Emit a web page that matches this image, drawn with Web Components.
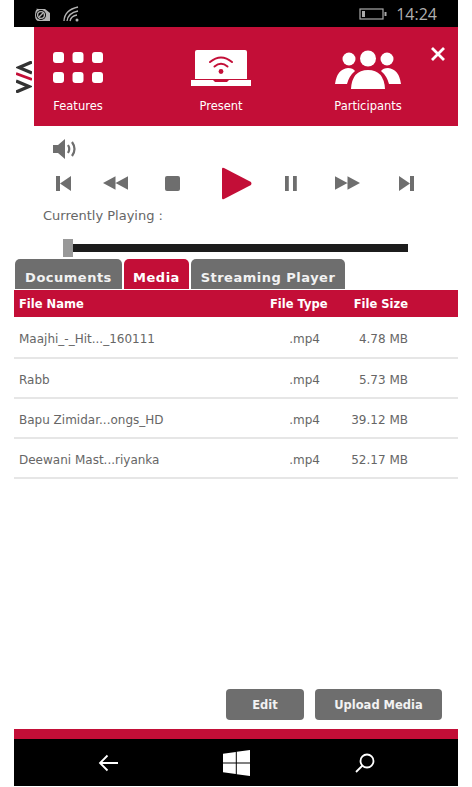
<!DOCTYPE html>
<html>
<head>
<meta charset="utf-8">
<title>Media</title>
<style>
    html, body { margin: 0; padding: 0; background: #fff; }
    body { font-family: "DejaVu Sans", sans-serif; }
</style>
</head>
<body>
<phone-shell>
    <status-bar slot="top" time="14:24"></status-bar>
    <top-nav slot="top"></top-nav>
    <media-player></media-player>
    <media-tabs active="Media"></media-tabs>
    <file-table></file-table>
    <action-bar slot="bottom"></action-bar>
    <nav-bar slot="bottom"></nav-bar>
</phone-shell>

<script>
class PhoneShell extends HTMLElement {
    constructor() {
        super();
        this.attachShadow({ mode: "open" });
        this.shadowRoot.innerHTML = `
            <style>
                :host {
                    display: flex;
                    flex-direction: column;
                    box-sizing: border-box;
                    width: 444px;
                    height: 786px;
                    margin-left: 14px;
                    background: #fff;
                }
                .main { flex: 1; }
            </style>
            <slot name="top"></slot>
            <div class="main"><slot></slot></div>
            <slot name="bottom"></slot>
        `;
    }
}

class StatusBar extends HTMLElement {
    constructor() {
        super();
        this.attachShadow({ mode: "open" });
        this.shadowRoot.innerHTML = `
            <style>
                :host {
                    display: flex;
                    align-items: center;
                    height: 27px;
                    background: #000;
                    color: #aaa;
                    padding-left: 20px;
                    padding-right: 21px;
                }
                svg { display: block; }
                .wifi { margin-left: 11px; }
                .battery { margin-left: auto; }
                .time { margin-left: 9px; font-size: 16px; font-family: "Open Sans", sans-serif; color: #b0b0b0; }
            </style>
            <svg width="18" height="16" viewBox="0 0 18 16">
                <path d="M2 3h9l5 4v8H5Q1 15 1 9Q1 3 5 2z" fill="#b4b4b4"/>
                <circle cx="7" cy="9" r="5" fill="#000"/>
                <circle cx="7" cy="9" r="3.4" fill="none" stroke="#b4b4b4" stroke-width="1.4"/>
                <path d="M5 11l4-4" stroke="#b4b4b4" stroke-width="1.4"/>
            </svg>
            <svg class="wifi" width="18" height="18" viewBox="0 0 18 18" fill="none" stroke="#b4b4b4" stroke-width="1.3">
                <path d="M1 16Q1.500 5 15 2"/>
                <path d="M4 16Q5 8 15 6"/>
                <path d="M7 16Q8 11 14 10"/>
                <circle cx="14" cy="15" r="1.500" fill="#b4b4b4" stroke="none"/>
            </svg>
            <svg class="battery" width="28" height="12" viewBox="0 0 28 12">
                <rect x="1" y="1" width="23" height="10" fill="none" stroke="#aaa" stroke-width="1.200"/>
                <rect x="3" y="3" width="3" height="6" fill="#aaa"/>
                <rect x="25.500" y="4" width="2" height="4" fill="#aaa"/>
            </svg>
            <span class="time">${this.getAttribute("time")}</span>
        `;
    }
}

class TopNav extends HTMLElement {
    constructor() {
        super();
        this.attachShadow({ mode: "open" });
        this.shadowRoot.innerHTML = `
            <style>
                :host { display: flex; height: 99px; }
                .logo { width: 20px; display: flex; align-items: center; box-sizing: border-box; }
                .logo svg { display: block; margin-left: 2px; }
                .panel {
                    position: relative;
                    flex: 1;
                    background: #c30e37;
                    color: #fff;
                    display: flex;
                    padding: 22px 0 0 19px;
                    font-size: 11.5px;
                }
                .item { display: flex; flex-direction: column; align-items: center; width: 50px; }
                .item svg { display: block; height: 40px; }
                .item span { margin-top: 10px; white-space: nowrap; }
                .present { width: 60px; margin-left: 88px; }
                .people { width: 70px; margin-left: 82px; }
                .close { position: absolute; top: 20px; right: 13px; }
            </style>
            <div class="logo">
                <svg width="16" height="32" viewBox="0 0 16 32" fill="none" stroke-width="3.400">
                    <path d="M16 1L3 6.500L16 12" stroke="#333"/>
                    <path d="M0 12.500L16 18.500" stroke="#c30e37" stroke-width="2.800"/>
                    <path d="M0 20L13 25.500L0 31" stroke="#333"/>
                </svg>
            </div>
            <div class="panel">
                <div class="item">
                    <svg width="50" height="40" viewBox="0 0 50 40" fill="#fff">
                        <rect x="0" y="3" width="11" height="11" rx="3"/>
                        <rect x="19.500" y="3" width="11" height="11" rx="3"/>
                        <rect x="39" y="3" width="11" height="11" rx="3"/>
                        <rect x="0" y="23" width="11" height="11" rx="3"/>
                        <rect x="19.500" y="23" width="11" height="11" rx="3"/>
                        <rect x="39" y="23" width="11" height="11" rx="3"/>
                    </svg>
                    <span>Features</span>
                </div>
                <div class="item present">
                    <svg width="60" height="40" viewBox="0 0 60 40">
                        <path d="M6 1Q4 1 4 3V30H56V3Q56 1 54 1H6z" fill="#fff"/>
                        <path d="M0 31H22l2 2h12l2-2H60v6H0z" fill="#fff"/>
                        <g fill="none" stroke="#c30e37" stroke-width="2" stroke-linecap="round">
                            <path d="M19 13Q30 4 41 13"/>
                            <path d="M23.500 17.500Q30 12 36.500 17.500"/>
                        </g>
                        <circle cx="30" cy="22.500" r="2.400" fill="#c30e37"/>
                    </svg>
                    <span>Present</span>
                </div>
                <div class="item people">
                    <svg width="66" height="40" viewBox="0 0 66 40" fill="#fff">
                        <circle cx="14" cy="10" r="6.500"/>
                        <circle cx="52" cy="10" r="6.500"/>
                        <path d="M0 35Q2 20 13 19Q18 19 20 22Q14 27 12 35z"/>
                        <path d="M66 35Q64 20 53 19Q48 19 46 22Q52 27 54 35z"/>
                        <circle cx="33" cy="9.500" r="8"/>
                        <path d="M16 40Q17 21 33 21Q49 21 50 40z"/>
                    </svg>
                    <span>Participants</span>
                </div>
                <svg class="close" width="14" height="14" viewBox="0 0 14 14" stroke="#fff" stroke-width="2.800" fill="none">
                    <path d="M1 1L13 13M13 1L1 13"/>
                </svg>
            </div>
        `;
    }
}

class MediaPlayer extends HTMLElement {
    constructor() {
        super();
        this.attachShadow({ mode: "open" });
        const grey = "#6e6e6e";
        this.shadowRoot.innerHTML = `
            <style>
                :host { display: block; box-sizing: border-box; height: 133px; padding-top: 13px; color: #666; }
                svg { display: block; flex: none; }
                .volume { margin-left: 39px; }
                .controls {
                    display: flex;
                    align-items: center;
                    margin: 6px 0 0 42px;
                    height: 36px;
                }
                .label { margin: 6px 0 0 29px; font-size: 13px; line-height: 18px; }
                .slider { display: flex; align-items: center; margin: 14px 0 0 49px; width: 345px; height: 18px; }
                .thumb { width: 10px; height: 18px; background: #999; }
                .track { flex: 1; height: 8px; background: #1c1c1c; }
            </style>
            <svg class="volume" width="25" height="20" viewBox="0 0 25 20" fill="${grey}">
                <path d="M0 6H5L12 0V20L5 14H0z"/>
                <path d="M15 6Q17.500 10 15 14" fill="none" stroke="${grey}" stroke-width="2.200"/>
                <path d="M19 3Q24 10 19 17" fill="none" stroke="${grey}" stroke-width="2.200"/>
            </svg>
            <div class="controls">
                <svg width="16" height="15" viewBox="0 0 16 15" fill="${grey}"><rect x="0" y="0" width="4" height="15"/><path d="M15 0V15L4 7.500z"/></svg>
                <svg style="margin-left:31px" width="25" height="14" viewBox="0 0 26 14" fill="${grey}"><path d="M13 0V14L0 7zM26 0V14L13 7z"/></svg>
                <svg style="margin-left:37px" width="15" height="15" viewBox="0 0 15 15" fill="${grey}"><rect width="15" height="15" rx="2"/></svg>
                <svg style="margin-left:41px" width="31" height="33" viewBox="0 0 31 33" fill="#c30e37"><path d="M1 2Q1 0 3 1L30 15Q31 16.500 30 18L3 32Q1 33 1 31z"/></svg>
                <svg style="margin-left:33px" width="12" height="15" viewBox="0 0 12 15" fill="${grey}"><rect x="0" y="0" width="3.800" height="15"/><rect x="8" y="0" width="3.800" height="15"/></svg>
                <svg style="margin-left:38px" width="25" height="14" viewBox="0 0 26 14" fill="${grey}"><path d="M0 0V14L13 7zM13 0V14L26 7z"/></svg>
                <svg style="margin-left:38px" width="16" height="15" viewBox="0 0 16 15" fill="${grey}"><path d="M1 0V15L12 7.500z"/><rect x="12" y="0" width="4" height="15"/></svg>
            </div>
            <div class="label">Currently Playing :</div>
            <div class="slider"><div class="thumb"></div><div class="track"></div></div>
        `;
    }
}

class MediaTabs extends HTMLElement {
    constructor() {
        super();
        this.attachShadow({ mode: "open" });
        const active = this.getAttribute("active");
        const tabs = [["Documents", 107], ["Media", 65], ["Streaming Player", 154]];
        this.shadowRoot.innerHTML = `
            <style>
                :host { display: flex; gap: 2px; padding-left: 1px; height: 31px; }
                .tab {
                    box-sizing: border-box;
                    height: 30px;
                    background: #6e6e6e;
                    color: #f2f2f2;
                    border-radius: 5px 5px 0 0;
                    font-size: 13px;
                    letter-spacing: 0.5px;
                    font-weight: bold;
                    line-height: 37px;
                    text-align: center;
                    white-space: nowrap;
                }
                .on { background: #c30e37; color: #fff; }
            </style>
            ${tabs.map(t => `<div class="tab ${t[0] === active ? "on" : ""}" style="width:${t[1]}px">${t[0]}</div>`).join("")}
        `;
    }
}

class FileTable extends HTMLElement {
    constructor() {
        super();
        this.attachShadow({ mode: "open" });
        const files = [
            ["Maajhi_-_Hit..._160111", ".mp4", "4.78 MB"],
            ["Rabb", ".mp4", "5.73 MB"],
            ["Bapu Zimidar...ongs_HD", ".mp4", "39.12 MB"],
            ["Deewani Mast...riyanka", ".mp4", "52.17 MB"]
        ];
        this.shadowRoot.innerHTML = `
            <style>
                :host { display: block; font-size: 12px; }
                .row {
                    display: grid;
                    box-sizing: border-box;
                    grid-template-columns: 251px 60px 78px;
                    padding-left: 5px;
                    align-items: center;
                    white-space: nowrap;
                }
                .head { height: 27px; padding-top: 1px; background: #c30e37; color: #fff; font-weight: bold; font-size: 11.500px; }
                .head div:last-child { text-align: right; }
                .item { height: 40px; padding-top: 3px; border-bottom: 2px solid #e6e6e6; color: #666; }
                .head + .item { height: 42px; padding-top: 4px; }
                .type { text-align: right; padding-right: 10px; }
                .size { text-align: right; }
            </style>
            <div class="row head"><div>File Name</div><div>File Type</div><div>File Size</div></div>
            ${files.map(f => `<div class="row item"><div>${f[0]}</div><div class="type">${f[1]}</div><div class="size">${f[2]}</div></div>`).join("")}
        `;
    }
}

class ActionBar extends HTMLElement {
    constructor() {
        super();
        this.attachShadow({ mode: "open" });
        this.shadowRoot.innerHTML = `
            <style>
                :host { display: flex; justify-content: flex-end; gap: 11px; padding: 0 16px 9px 0; }
                .btn {
                    height: 31px;
                    background: #6e6e6e;
                    color: #f2f2f2;
                    border-radius: 4px;
                    font-size: 11.500px;
                    font-weight: bold;
                    line-height: 33px;
                    text-align: center;
                }
            </style>
            <div class="btn" style="width:78px">Edit</div>
            <div class="btn" style="width:127px">Upload Media</div>
        `;
    }
}

class NavBar extends HTMLElement {
    constructor() {
        super();
        this.attachShadow({ mode: "open" });
        this.shadowRoot.innerHTML = `
            <style>
                :host { display: block; border-top: 10px solid #c30e37; background: #000; height: 47px; }
                .bar { display: grid; grid-template-columns: 20px 28px 22px; justify-content: space-between; align-items: center; height: 47px; padding: 0 82px 0 84px; }
                svg { display: block; }
                .win { margin-left: 1px; }
            </style>
            <div class="bar">
                <svg width="20" height="18" viewBox="0 0 20 18" fill="none" stroke="#fff" stroke-width="1.800"><path d="M20 9H2M9.500 1.500L2 9L9.500 16.500"/></svg>
                <svg class="win" width="28" height="26" viewBox="0 0 28 26" fill="#fff"><path d="M0 3.800L12.800 2V12.500H0zM13.800 1.800L27 0V12.500H13.800zM0 13.500H12.800V24L0 22.200zM13.800 13.500H27V26L13.800 24.200z"/></svg>
                <svg width="22" height="22" viewBox="0 0 22 22" fill="none" stroke="#fff" stroke-width="1.800"><circle cx="13" cy="9" r="6.500"/><path d="M8.500 13.500L2 20"/></svg>
            </div>
        `;
    }
}

customElements.define("phone-shell", PhoneShell);
customElements.define("status-bar", StatusBar);
customElements.define("top-nav", TopNav);
customElements.define("media-player", MediaPlayer);
customElements.define("media-tabs", MediaTabs);
customElements.define("file-table", FileTable);
customElements.define("action-bar", ActionBar);
customElements.define("nav-bar", NavBar);
</script>
</body>
</html>
